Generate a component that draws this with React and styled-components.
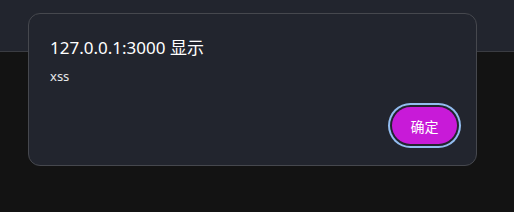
import styled, { createGlobalStyle } from "styled-components";

const GlobalStyle = createGlobalStyle`
  html, body {
    margin: 0;
    padding: 0;
    background: #131313;
    font-family: "Noto Sans", "Noto Sans CJK SC", sans-serif;
  }
`;

function App() {
  return (
    <Page>
      <GlobalStyle />
      <TopBar />
      <Dialog role="alertdialog">
        <Title>127.0.0.1:3000 显示</Title>
        <Message>xss</Message>
        <Actions>
          <OkButton autoFocus>确定</OkButton>
        </Actions>
      </Dialog>
    </Page>
  );
}

const Page = styled.div`
  position: relative;
  width: 514px;
  height: 212px;
  overflow: hidden;
  background: #131313;
`;

const TopBar = styled.div`
  height: 51px;
  background: #22252e;
  border-bottom: 1px solid #3a3c42;
`;

const Dialog = styled.div`
  position: absolute;
  top: 13px;
  left: 28px;
  width: 449px;
  height: 153px;
  box-sizing: border-box;
  padding: 22px 19px 21px 21px;
  display: flex;
  flex-direction: column;
  background: #22252e;
  border: 1px solid #46484e;
  border-radius: 12px;
  color: #ffffff;
`;

const Title = styled.div`
  font-size: 17px;
  line-height: 23px;
`;

const Message = styled.div`
  margin-top: 8px;
  font-size: 13px;
  line-height: 18px;
  color: #e8e8ea;
`;

const Actions = styled.div`
  margin-top: auto;
  display: flex;
  justify-content: flex-end;
`;

const OkButton = styled.button`
  width: 65px;
  height: 37px;
  border: none;
  border-radius: 19px;
  background: #c81ad8;
  color: #ffffff;
  font-family: "Noto Sans CJK SC", "Noto Sans", sans-serif;
  font-size: 14px;
  box-shadow: 0 0 0 2px #22252e, 0 0 0 4px #93bdf0;
  outline: none;
  cursor: pointer;
`;

export default App;
